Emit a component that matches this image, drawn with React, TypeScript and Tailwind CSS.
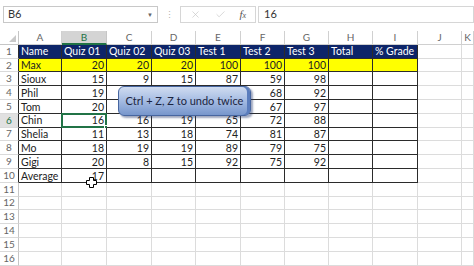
import { Check, X } from "lucide-react";

type Col = { label: string };

const cols: Col[] = ["A", "B", "C", "D", "E", "F", "G", "H", "I", "J", "K"].map((label) => ({ label }));

// row values, A..I (cells under the callout are left blank, they can't be seen)
const data: (string | number)[][] = [
  ["Name", "Quiz 01", "Quiz 02", "Quiz 03", "Test 1", "Test 2", "Test 3", "Total", "% Grade"],
  ["Max", 20, 20, 20, 100, 100, 100, "", ""],
  ["Sioux", 15, 9, 15, 87, 59, 98, "", ""],
  ["Phil", 19, "", "", "", 68, 92, "", ""],
  ["Tom", 20, "", "", "", 67, 97, "", ""],
  ["Chin", 16, 16, 19, 65, 72, 88, "", ""],
  ["Shelia", 11, 13, 18, 74, 81, 87, "", ""],
  ["Mo", 18, 19, 19, 89, 79, 75, "", ""],
  ["Gigi", 20, 8, 15, 92, 75, 92, "", ""],
  ["Average", 17, "", "", "", "", "", "", ""],
];

const rows = Array.from({ length: 16 }, (_, i) => i + 1);

const Cell = ({ r, c }: { r: number; c: number }) => {
  const inTable = r <= 10 && c <= 8;
  const value = inTable ? data[r - 1][c] : "";
  const isHeader = r === 1 && inTable;
  const isMax = r === 2 && inTable;
  const selected = r === 6 && c === 1;
  const numeric = typeof value === "number";

  let cls = "relative flex items-center overflow-visible whitespace-nowrap border-b border-r px-[2px] text-[10.5px] leading-none";
  cls += inTable ? " border-[#2b2b2b]" : " border-[#dcdcdc]";
  if (isHeader) cls += " bg-[#0d2569] text-white";
  else if (isMax) cls += " bg-[#ffff00] text-[#222]";
  else cls += " bg-white text-[#222]";
  cls += numeric ? " justify-end" : " justify-start";

  return (
    <div className={cls}>
      <span className="pt-[1px]">{value}</span>
      {selected && (
        <>
          <div className="pointer-events-none absolute -left-[1px] -top-[1px] -right-[1px] -bottom-[1px] border-2 border-[#217346]" />
          <div className="absolute -bottom-[3px] -right-[3px] h-[5px] w-[5px] border border-white bg-[#217346]" />
        </>
      )}
    </div>
  );
};

const FormulaBar = () => (
  <div className="flex h-[31px] items-start bg-white pl-[3px] pt-[6px] text-[11px] text-[#333]">
    <div className="flex h-[17px] w-[155px] items-center justify-between border border-[#c8c8c8] pl-[4px] pr-[4px]">
      <span>B6</span>
      <span className="text-[6px] text-[#666]">▼</span>
    </div>
    <div className="flex h-[17px] w-[22px] items-center justify-center text-[9px] text-[#b0b0b0]">⋮</div>
    <div className="flex h-[17px] w-[76px] items-center justify-around border border-[#d6d6d6] px-[2px] text-[#c4c4c4]">
      <X size={11} strokeWidth={1.4} />
      <Check size={11} strokeWidth={1.4} />
      <span className="font-['Liberation_Serif',serif] text-[11px] italic text-[#555]">
        f<span className="text-[8px]">x</span>
      </span>
    </div>
    <div className="ml-[2px] flex h-[17px] flex-1 items-center border border-[#d6d6d6] pl-[5px]">16</div>
  </div>
);

const Tooltip = () => (
  <div className="absolute left-[118px] top-[86px] flex h-[30px] w-[133px] items-center justify-center rounded-[6px] border border-[#4766a0] bg-gradient-to-b from-[#d0dcf0] via-[#a4bbe2] to-[#7796cc] text-[11px] text-[#1b2440] shadow-[2px_2px_2px_rgba(40,60,110,0.45),inset_-3px_0_0_#5a7dbd]">
    Ctrl + Z, Z to undo twice
  </div>
);

const Cursor = () => (
  <svg className="absolute left-[86px] top-[177px]" width="11" height="11" viewBox="0 0 11 11">
    <path
      d="M3.5 0.5h4v3h3v4h-3v3h-4v-3h-3v-4h3z"
      fill="white"
      stroke="black"
      strokeWidth="1"
    />
  </svg>
);

const App = () => (
  <div className="relative h-[266px] w-[474px] overflow-hidden bg-white font-['Lato',sans-serif]">
    <FormulaBar />
    <div className="grid grid-cols-[19px_43px_45px_45px_44px_45px_44px_44px_44px_45px_44px_1fr] auto-rows-[13.8px]">
      <div className="relative h-[14px] border-b border-r border-[#c6c6c6] bg-white">
        <div className="absolute bottom-[2px] right-[2px] h-0 w-0 border-b-[7px] border-l-[7px] border-b-[#c9c9c9] border-l-transparent" />
      </div>
      {cols.map((col, c) => (
        <div
          key={col.label}
          className={
            c === 1
              ? "flex h-[14px] items-center justify-center border-b-2 border-r border-b-[#217346] border-r-[#c6c6c6] bg-[#d4d4d4] text-[10px] text-[#217346]"
              : "flex h-[14px] items-center justify-center border-b border-r border-[#d0d0d0] bg-white text-[10px] text-[#666]"
          }
        >
          {col.label}
        </div>
      ))}
      {rows.map((r) => (
        <div key={r} className="contents">
          <div
            className={
              (r === 6
                ? "bg-[#e1e1e1] text-[#217346]"
                : "bg-white text-[#666]") +
              (r <= 10 ? " border-r-[#2b2b2b]" : " border-r-[#c6c6c6]") +
              " flex items-center justify-center border-b border-r border-b-[#dadada] text-[10px]"
            }
          >
            {r}
          </div>
          {cols.map((col, c) => (
            <Cell key={col.label} r={r} c={c} />
          ))}
        </div>
      ))}
    </div>
    <Tooltip />
    <Cursor />
  </div>
);

export default App;
